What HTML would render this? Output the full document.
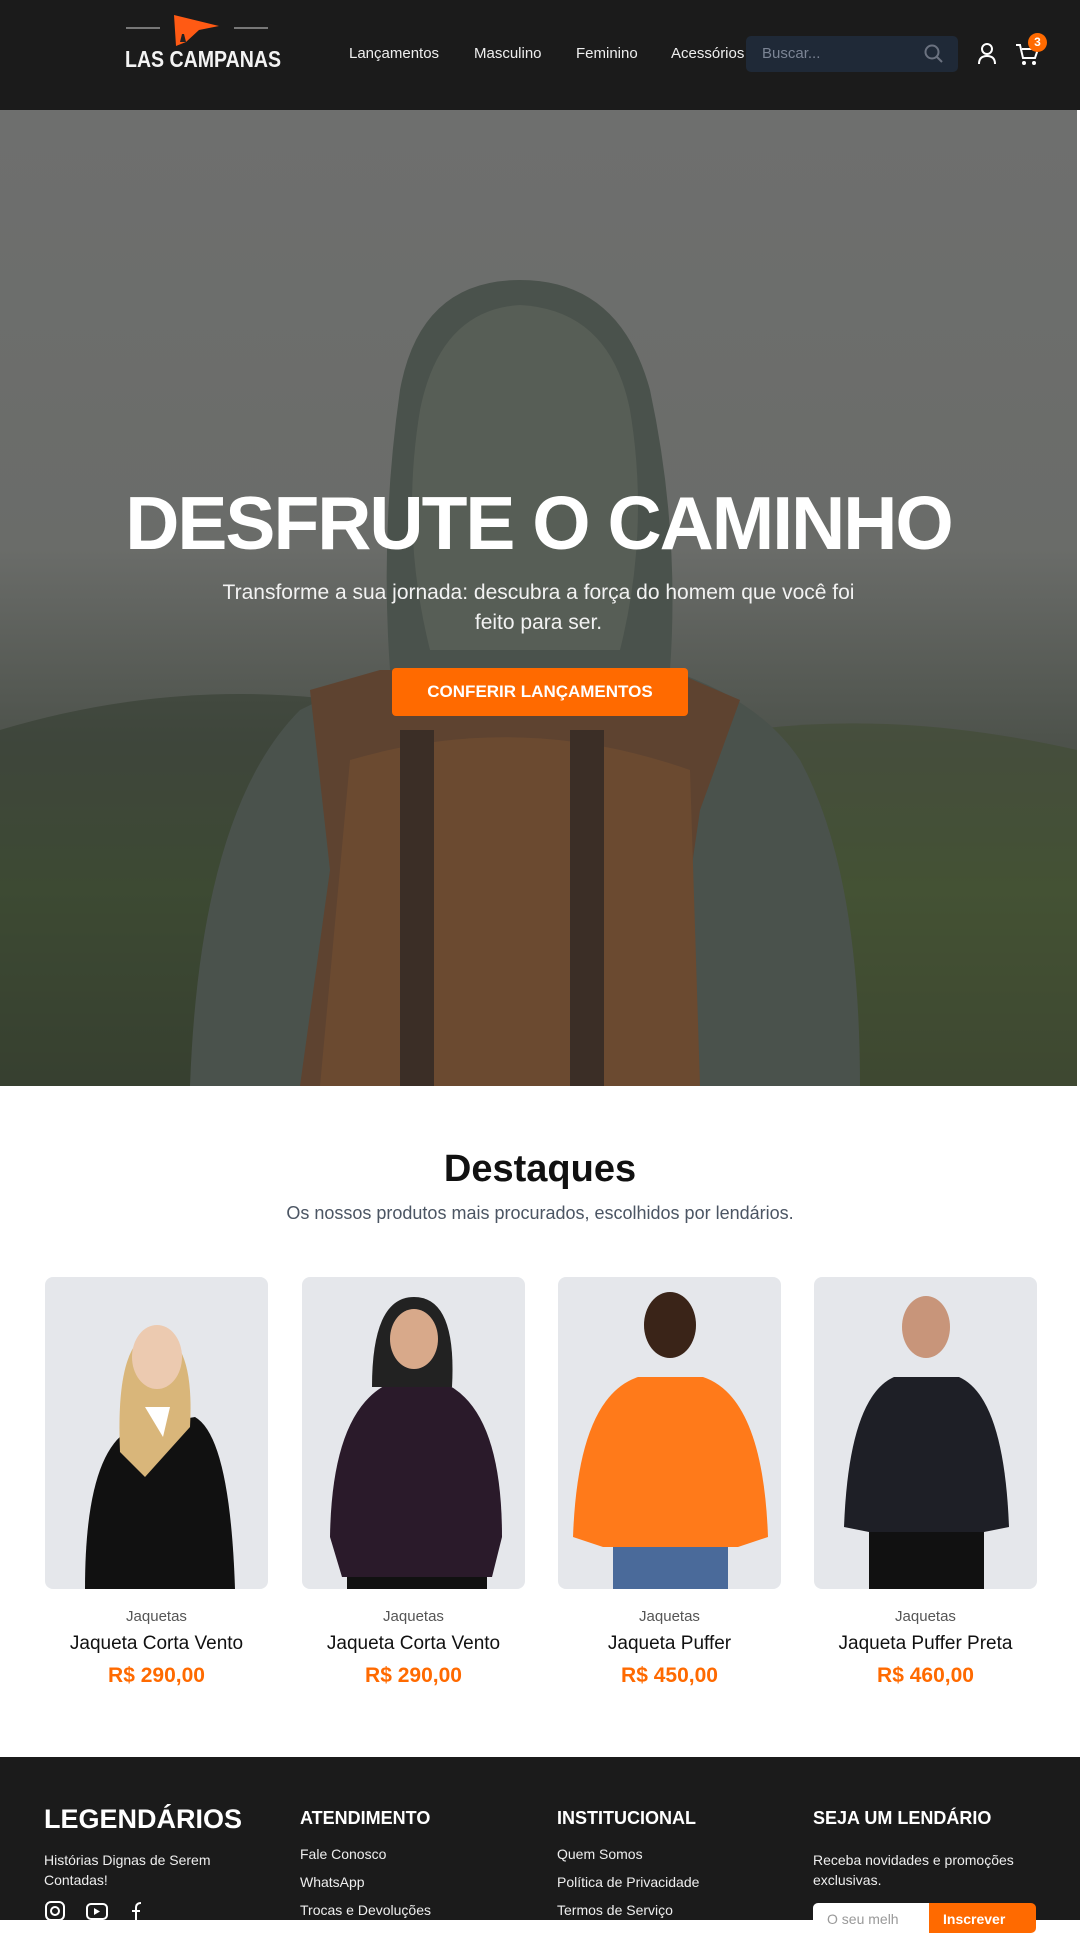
<!DOCTYPE html>
<html><head><meta charset="utf-8"><style>
*{margin:0;padding:0;box-sizing:border-box}
body{width:1080px;height:1920px;overflow:hidden;font-family:"Liberation Sans",sans-serif;background:#fff;position:relative}
.hdr{position:absolute;left:0;top:0;width:1080px;height:110px;background:#1b1b1b}
.nav a{position:absolute;top:45px;color:#eee;font-size:15px;text-decoration:none}
.search{position:absolute;left:746px;top:36px;width:212px;height:36px;background:#1f2937;border-radius:5px;color:#7b8494;font-size:15px;padding:9px 0 0 16px}
.hero{position:absolute;left:0;top:110px;width:1077px;height:976px;overflow:hidden;background:linear-gradient(#6e6f6e 0%,#6a6c69 45%,#4d524b 65%,#4a5a3a 80%,#3e4634 100%)}
.abs{position:absolute}
.card{position:absolute;top:1277px;width:223px;height:312px;background:#e5e7eb;border-radius:8px;overflow:hidden}
.cat{position:absolute;width:223px;text-align:center;top:1608px;font-size:15px;color:#555}
.nm{position:absolute;width:223px;text-align:center;top:1633px;font-size:19px;color:#111}
.pr{position:absolute;width:223px;text-align:center;top:1664px;font-size:21px;font-weight:bold;color:#ff6a00}
.ft{position:absolute;left:0;top:1757px;width:1080px;height:163px;background:#1b1b1b;color:#fff}
.fh{position:absolute;top:51px;font-size:18px;font-weight:bold}
.fl{position:absolute;font-size:14px;color:#eee;line-height:28px}
</style></head><body>
<div class="hdr">
 <svg class="abs" style="left:124px;top:12px" width="146" height="62" viewBox="0 0 146 62">
  <line x1="2" y1="16" x2="36" y2="16" stroke="#777" stroke-width="2"/>
  <line x1="110" y1="16" x2="144" y2="16" stroke="#777" stroke-width="2"/>
  <path d="M50 3 L52 34 L62 30 L75 18 L95 14 Z" fill="#ff5a14"/>
  <path d="M56 30 l2-8 2 0 2 8z" fill="#222"/>
 </svg>
 <div class="abs" style="left:125px;top:46px;color:#f3f3f3;font-size:23px;font-weight:bold;letter-spacing:0px;transform:scaleX(.85);transform-origin:left">LAS CAMPANAS</div>
 <div class="nav"><a style="left:349px">Lançamentos</a><a style="left:474px">Masculino</a><a style="left:576px">Feminino</a><a style="left:671px">Acessórios</a></div>
 <div class="search">Buscar...</div>
 <svg class="abs" style="left:924px;top:44px" width="20" height="20"><circle cx="8" cy="8" r="6.5" fill="none" stroke="#6b7280" stroke-width="2"/><line x1="13" y1="13" x2="18" y2="18" stroke="#6b7280" stroke-width="2"/></svg>
 <svg class="abs" style="left:976px;top:42px" width="22" height="24"><circle cx="11" cy="7" r="5" fill="none" stroke="#fff" stroke-width="2"/><path d="M3 22 Q3 14 11 14 Q19 14 19 22" fill="none" stroke="#fff" stroke-width="2"/></svg>
 <svg class="abs" style="left:1014px;top:42px" width="26" height="26"><path d="M2 3h4l3 13h12l3-9H8" fill="none" stroke="#fff" stroke-width="2"/><circle cx="10" cy="21" r="2" fill="#fff"/><circle cx="20" cy="21" r="2" fill="#fff"/></svg>
 <div class="abs" style="left:1028px;top:33px;width:19px;height:19px;border-radius:50%;background:#ff6a00;color:#fff;font-size:12px;font-weight:bold;text-align:center;line-height:19px">3</div>
</div>
<div class="hero">
 <svg class="abs" style="left:0;top:0" width="1077" height="976" viewBox="0 0 1077 976">
  <path d="M0 620 Q200 560 400 600 L400 976 L0 976Z" fill="#2f3a2c" opacity=".5"/>
  <path d="M1077 640 Q900 600 750 620 L750 976 L1077 976Z" fill="#3e4a2e" opacity=".5"/>
  <path d="M190 976 Q200 700 300 600 Q360 570 390 560 Q380 420 400 280 Q420 170 520 170 Q620 170 650 280 Q680 420 670 560 Q760 590 800 650 Q860 760 860 976Z" fill="#4a524c"/>
  <path d="M420 300 Q440 200 520 195 Q610 200 630 300 Q650 420 620 540 L430 540 Q400 420 420 300Z" fill="#575e56"/>
  <path d="M310 580 L380 560 L670 560 L740 590 L700 700 L660 976 L300 976 L330 760Z" fill="#5e4330"/>
  <path d="M350 650 Q520 600 690 660 L700 976 L320 976Z" fill="#6b4a30"/>
  <rect x="400" y="620" width="34" height="356" fill="#3b2e26"/>
  <rect x="570" y="620" width="34" height="356" fill="#3b2e26"/>
 </svg>
 <div class="abs" style="left:0;width:1077px;top:370px;text-align:center;color:#fff;font-size:75px;font-weight:bold;letter-spacing:-2px">DESFRUTE O CAMINHO</div>
 <div class="abs" style="left:200px;width:677px;top:468px;text-align:center;color:#f2f2f2;font-size:21px;line-height:30px">Transforme a sua jornada: descubra a força do homem que você foi feito para ser.</div>
 <div class="abs" style="left:392px;top:558px;width:296px;height:48px;background:#ff6a00;border-radius:4px;color:#fff;font-weight:bold;font-size:17px;text-align:center;line-height:48px">CONFERIR LANÇAMENTOS</div>
</div>
<div class="abs" style="left:0;width:1080px;top:1148px;text-align:center;font-size:38px;font-weight:bold;color:#111">Destaques</div>
<div class="abs" style="left:0;width:1080px;top:1203px;text-align:center;font-size:18px;color:#4b5563">Os nossos produtos mais procurados, escolhidos por lendários.</div>

<div class="card" style="left:45px"><svg width="223" height="312"><path d="M40 312 Q40 170 90 150 L150 140 Q185 160 190 312Z" fill="#111"/><path d="M75 175 Q70 60 110 55 Q150 60 145 150 L100 200Z" fill="#d9b67a"/><ellipse cx="112" cy="80" rx="25" ry="32" fill="#eccab0"/><path d="M100 130 L125 130 L118 160 Z" fill="#fff"/></svg></div>
<div class="card" style="left:302px"><svg width="223" height="312"><path d="M28 260 Q30 130 90 105 L140 105 Q200 130 200 260 L190 300 L40 300Z" fill="#2a1a2a"/><path d="M70 110 Q70 20 112 20 Q155 20 150 110Z" fill="#222"/><ellipse cx="112" cy="62" rx="24" ry="30" fill="#d8a98a"/><rect x="45" y="300" width="140" height="12" fill="#111"/></svg></div>
<div class="card" style="left:558px"><svg width="223" height="312"><path d="M15 260 Q20 120 80 100 L145 100 Q205 120 210 260 L180 270 L45 270Z" fill="#ff7a1a"/><ellipse cx="112" cy="48" rx="26" ry="33" fill="#3a2418"/><rect x="55" y="270" width="115" height="42" fill="#4a6a9a"/></svg></div>
<div class="card" style="left:814px"><svg width="223" height="312"><path d="M30 250 Q35 120 80 100 L145 100 Q190 120 195 250 L170 255 L55 255Z" fill="#1e1f26"/><ellipse cx="112" cy="50" rx="24" ry="31" fill="#c8957a"/><rect x="55" y="255" width="115" height="57" fill="#111"/></svg></div>

<div class="cat" style="left:45px">Jaquetas</div><div class="nm" style="left:45px">Jaqueta Corta Vento</div><div class="pr" style="left:45px">R$ 290,00</div>
<div class="cat" style="left:302px">Jaquetas</div><div class="nm" style="left:302px">Jaqueta Corta Vento</div><div class="pr" style="left:302px">R$ 290,00</div>
<div class="cat" style="left:558px">Jaquetas</div><div class="nm" style="left:558px">Jaqueta Puffer</div><div class="pr" style="left:558px">R$ 450,00</div>
<div class="cat" style="left:814px">Jaquetas</div><div class="nm" style="left:814px">Jaqueta Puffer Preta</div><div class="pr" style="left:814px">R$ 460,00</div>

<div class="ft">
 <div class="abs" style="left:44px;top:47px;font-size:27px;font-weight:bold">LEGENDÁRIOS</div>
 <div class="fl" style="left:44px;top:93px;width:200px;line-height:20px">Histórias Dignas de Serem Contadas!</div>
 <svg class="abs" style="left:44px;top:143px" width="100" height="22"><rect x="2" y="2" width="18" height="18" rx="5" fill="none" stroke="#fff" stroke-width="2"/><circle cx="11" cy="11" r="4" fill="none" stroke="#fff" stroke-width="2"/><rect x="43" y="4" width="20" height="15" rx="4" fill="none" stroke="#fff" stroke-width="2"/><path d="M50 8 l6 3.5 -6 3.5z" fill="#fff"/><path d="M92 20 V8 Q92 3 97 3 M88 11 h8" fill="none" stroke="#fff" stroke-width="2"/></svg>
 <div class="fh" style="left:300px">ATENDIMENTO</div>
 <div class="fl" style="left:300px;top:83px">Fale Conosco<br>WhatsApp<br>Trocas e Devoluções</div>
 <div class="fh" style="left:557px">INSTITUCIONAL</div>
 <div class="fl" style="left:557px;top:83px">Quem Somos<br>Política de Privacidade<br>Termos de Serviço</div>
 <div class="fh" style="left:813px">SEJA UM LENDÁRIO</div>
 <div class="fl" style="left:813px;top:93px;width:230px;line-height:20px">Receba novidades e promoções exclusivas.</div>
 <div class="abs" style="left:813px;top:146px;width:116px;height:30px;background:#fff;border-radius:5px 0 0 5px;color:#999;font-size:14px;padding:8px 14px">O seu melh</div>
 <div class="abs" style="left:929px;top:146px;width:107px;height:30px;background:#ff6a00;border-radius:0 5px 5px 0;color:#fff;font-size:14px;font-weight:bold;padding:8px 14px">Inscrever</div>
</div>
</body></html>
